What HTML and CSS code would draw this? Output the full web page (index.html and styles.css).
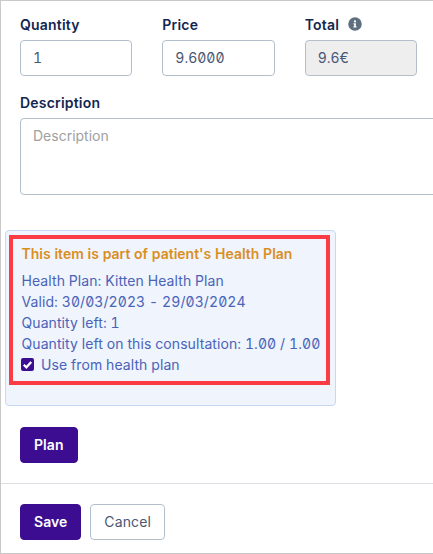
FILE: index.html
```html
<!DOCTYPE html>
<html lang="en">
<head>
<meta charset="utf-8">
<title>Item</title>
<link rel="stylesheet" href="styles.css">
</head>
<body>
<div class="frame">
  <div class="row">
    <div class="field">
      <label class="label">Quantity</label>
      <div class="input">1</div>
    </div>
    <div class="field">
      <label class="label">Price</label>
      <div class="input">9.6000</div>
    </div>
    <div class="field">
      <label class="label">Total
        <svg class="info" viewBox="0 0 512 512" width="14" height="14"><path fill="#5f6f80" d="M256 8a248 248 0 1 0 0 496 248 248 0 0 0 0-496zm0 110a42 42 0 1 1 0 84 42 42 0 0 1 0-84zm56 254c0 7-5 12-12 12h-88c-7 0-12-5-12-12v-24c0-7 5-12 12-12h12v-64h-12c-7 0-12-5-12-12v-24c0-7 5-12 12-12h64c7 0 12 5 12 12v100h12c7 0 12 5 12 12v24z"/></svg>
      </label>
      <div class="input disabled">9.6€</div>
    </div>
  </div>
  <div class="desc">
    <label class="label">Description</label>
    <div class="textarea">Description</div>
  </div>
  <div class="plan-box">
    <div class="highlight">
      <div class="plan-title">This item is part of patient's Health Plan</div>
      <div class="plan-line">Health Plan: Kitten Health Plan</div>
      <div class="plan-line">Valid: 30/03/2023 - 29/03/2024</div>
      <div class="plan-line">Quantity left: 1</div>
      <div class="plan-line">Quantity left on this consultation: 1.00 / 1.00</div>
      <div class="plan-line check-line">
        <span class="check"><svg viewBox="0 0 14 14" width="13" height="13"><path d="M3 7.2l2.8 2.8L11 4.2" fill="none" stroke="#fff" stroke-width="2.4"/></svg></span>
        Use from health plan
      </div>
    </div>
  </div>
  <div class="plan-action"><button class="btn primary">Plan</button></div>
  <div class="footer">
    <button class="btn primary">Save</button>
    <button class="btn ghost">Cancel</button>
  </div>
</div>
</body>
</html>
```
FILE: styles.css
```css
* { box-sizing: border-box; }
html, body { margin: 0; padding: 0; background: #fff; }
body {
  font-family: Inter, "Liberation Sans", sans-serif;
  color: #14264f;
  font-feature-settings: "tnum", "zero";
}
.frame {
  width: 433px;
  height: 554px;
  overflow: hidden;
  border-top: 1px solid #c9c9c9;
  border-left: 1px solid #c9c9c9;
  border-bottom: 1px solid #c9c9c9;
  padding-top: 15px;
}
.row { display: flex; gap: 30px; padding-left: 19px; }
.field { width: 112.33px; flex: none; }
.label { display: block; font-size: 14px; font-weight: 600; line-height: 18px; padding-bottom: 2px; color: #14264f; letter-spacing: 0.2px; }
.info { vertical-align: -1px; margin-left: 5px; }
.input {
  margin-top: 4px;
  height: 36px;
  border: 1px solid #b3c0cc;
  border-radius: 4px;
  padding: 0 12px;
  font-size: 14px;
  line-height: 34px;
  color: #4a5773;
}
.disabled { background: #eeeeee; }
.desc { padding-left: 19px; margin-top: 18px; width: 500px; }
.textarea {
  margin-top: 4px;
  height: 77px;
  border: 1px solid #b3c0cc;
  border-radius: 4px;
  padding: 7px 12px;
  font-size: 14px;
  line-height: 20px;
  color: #a0a0a0;
}
.plan-box {
  margin: 35px 0 0 4px;
  width: 331px;
  height: 176px;
  background: #eff4fd;
  border: 1px solid #c9d8f2;
  border-radius: 4px;
  padding: 4px 5px 0 3px;
}
.highlight {
  height: 150px;
  border: 4px solid #fb3c44;
  padding: 5px 0 5px 8.5px;
}
.plan-title { font-size: 14px; font-weight: 600; line-height: 20px; color: #d98f1f; margin-bottom: 6px; white-space: nowrap; }
.plan-line { font-size: 14px; line-height: 21px; color: #4a63b8; letter-spacing: 0.08px; white-space: nowrap; }
.check-line { display: flex; align-items: center; gap: 7px; }
.check {
  width: 13px;
  height: 13px;
  margin-left: -0.5px;
  background: #3c0d91;
  border-radius: 2px;
  display: block;
}
.check svg { display: block; }
.plan-action { padding: 21px 0 20px 19px; border-bottom: 1px solid #dcdfe3; }
.btn {
  font-family: inherit;
  font-feature-settings: inherit;
  font-size: 14px;
  height: 36px;
  border-radius: 4px;
  padding: 0 13px 2px;
  cursor: pointer;
}
.primary { background: #3c0d91; border: 1px solid #3c0d91; color: #fff; font-weight: 600; letter-spacing: 0.05px; }
.ghost { background: #fff; border: 1px solid #b3c0cc; color: #4a5773; font-weight: 400; letter-spacing: 0.12px; }
.footer { display: flex; gap: 9px; padding: 20px 0 0 19px; }
```
